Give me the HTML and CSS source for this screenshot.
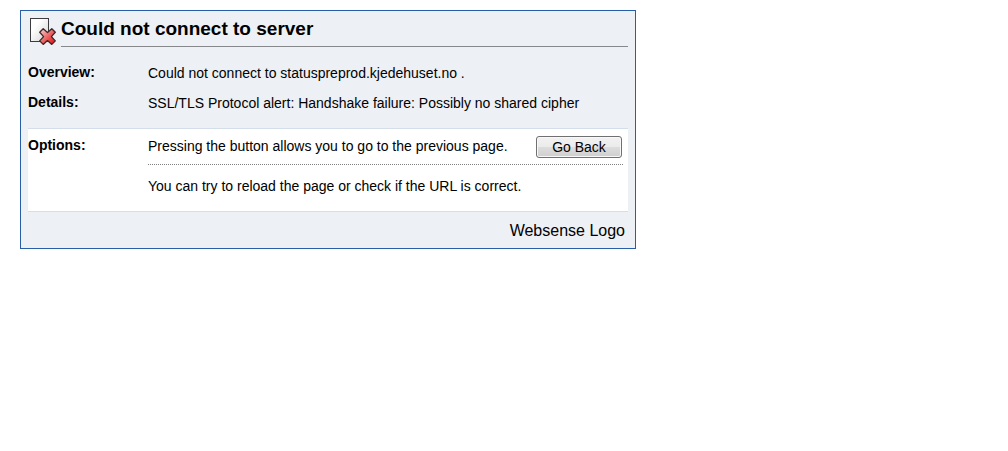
FILE: index.html
```html
<!DOCTYPE html>
<html lang="en">
<head>
<meta charset="utf-8">
<meta name="viewport" content="width=device-width, initial-scale=1">
<title>Could not connect to server</title>
<link rel="stylesheet" href="styles.css">
</head>
<body>
<main class="card">
  <header class="header">
    <svg class="icon" viewBox="0 0 28 30" aria-hidden="true">
      <defs>
        <linearGradient id="paper" x1="0" y1="0" x2="1" y2="1">
          <stop offset="0.3" stop-color="#ffffff"/>
          <stop offset="1" stop-color="#d2d2d2"/>
        </linearGradient>
        <linearGradient id="cross" x1="0" y1="0" x2="1" y2="1">
          <stop offset="0.1" stop-color="#f5c0c0"/>
          <stop offset="0.5" stop-color="#ee6565"/>
          <stop offset="0.85" stop-color="#ee2020"/>
        </linearGradient>
      </defs>
      <rect x="2.5" y="1.5" width="18" height="23" fill="url(#paper)" stroke="#3c3c40"/>
      <path d="M15.2 11.8 L19.5 15.6 L23.8 11.8 L27.3 15.3 L23.4 19.6 L27.3 23.9 L23.8 27.4 L19.5 23.6 L15.2 27.4 L11.7 23.9 L15.6 19.6 L11.7 15.3 Z" fill="url(#cross)" stroke="#402828" stroke-width="1.3" stroke-linejoin="round"/>
    </svg>
    <h1 class="title">Could not connect to server</h1>
  </header>
  <dl class="summary">
    <dt class="label">Overview:</dt>
    <dd class="text">Could not connect to statuspreprod.kjedehuset.no .</dd>
    <dt class="label">Details:</dt>
    <dd class="text">SSL/TLS Protocol alert: Handshake failure: Possibly no shared cipher</dd>
  </dl>
  <section class="options">
    <h2 class="label">Options:</h2>
    <div class="choices">
      <div class="choice">
        <p class="text">Pressing the button allows you to go to the previous page.</p>
        <button class="button" type="button">Go Back</button>
      </div>
      <p class="hint">You can try to reload the page or check if the URL is correct.</p>
    </div>
  </section>
  <footer class="footer">Websense Logo</footer>
</main>
</body>
</html>
```
FILE: styles.css
```css
* {
  box-sizing: border-box;
}

body {
  margin: 10px 20px;
  background: #fff;
  color: #000;
  font: 14px/20px "Liberation Sans", Arial, sans-serif;
}

h1, h2, p, dl, dd {
  margin: 0;
}

.card {
  max-width: 616px;
  padding: 0 7px;
  background: #edf0f5;
  border: 1px solid #285ea8;
}

.header {
  display: flex;
  align-items: flex-end;
  gap: 5px;
}

.icon {
  flex: none;
  width: 28px;
  height: 30px;
}

.title {
  flex: 1;
  border-bottom: 1px solid #87888c;
  font-size: 19px;
  line-height: 35px;
}

.summary {
  display: grid;
  grid-template-columns: 120px 1fr;
  row-gap: 10px;
  padding: 16px 0 15px;
}

.label {
  font-size: 14px;
  font-weight: bold;
  line-height: 18px;
}

.options {
  display: grid;
  grid-template-columns: 120px 1fr;
  padding: 7px 5px 15px 0;
  background: #fff;
  border-top: 1px solid #d3deea;
  border-bottom: 1px solid #d3deea;
}

.choice {
  display: flex;
  justify-content: space-between;
  align-items: flex-start;
  gap: 8px;
  padding-bottom: 6px;
  border-bottom: 1px dotted #808080;
}

.button {
  width: 86px;
  height: 22px;
  margin-right: 1px;
  padding: 0;
  background: linear-gradient(#f2f2f2 0%, #ebebeb 50%, #dddddd 50%, #cfcfcf 100%);
  border: 1px solid #707070;
  border-radius: 3px;
  box-shadow: inset 0 0 0 1px #f8f8f8;
  color: #000;
  font: 14px/20px "Liberation Sans", Arial, sans-serif;
}

.hint {
  padding-top: 11px;
}

.footer {
  padding: 9px 3px 7px;
  font-size: 16px;
  text-align: right;
}
```
